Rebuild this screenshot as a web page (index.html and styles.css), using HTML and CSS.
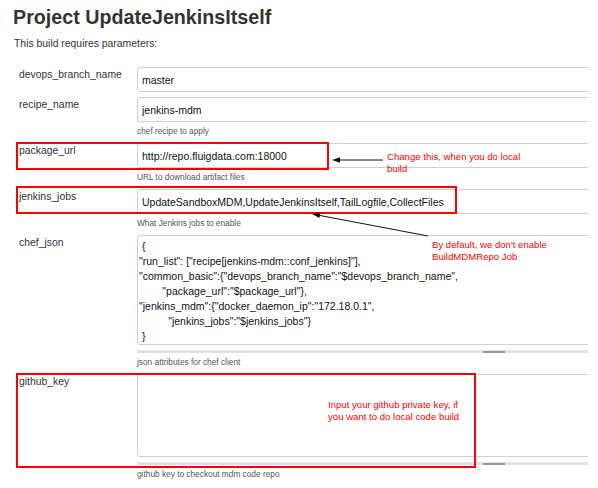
FILE: index.html
```html
<!DOCTYPE html>
<html>
<head>
<meta charset="utf-8">
<title>Project UpdateJenkinsItself</title>
<link rel="stylesheet" href="styles.css">
</head>
<body>
<div class="page">
  <h1 class="title">Project UpdateJenkinsItself</h1>
  <p class="intro">This build requires parameters:</p>
  <div class="params">
    <div class="param plain">
      <div class="name">devops_branch_name</div>
      <div class="control"><input class="field" type="text" value="master"></div>
    </div>
    <div class="param">
      <div class="name">recipe_name</div>
      <div class="control"><input class="field" type="text" value="jenkins-mdm"><div class="desc">chef recipe to apply</div></div>
    </div>
    <div class="param">
      <div class="name">package_url</div>
      <div class="control"><input class="field" type="text" value="http://repo.fluigdata.com:18000"><div class="desc">URL to download artifact files</div></div>
    </div>
    <div class="param">
      <div class="name">jenkins_jobs</div>
      <div class="control"><input class="field" type="text" value="UpdateSandboxMDM,UpdateJenkinsItself,TailLogfile,CollectFiles"><div class="desc">What Jenkins jobs to enable</div></div>
    </div>
    <div class="param">
      <div class="name">chef_json</div>
      <div class="control">
<textarea class="area json" wrap="off"> {
"run_list": ["recipe[jenkins-mdm::conf_jenkins]"],
"common_basic":{"devops_branch_name":"$devops_branch_name",
        "package_url":"$package_url"},
"jenkins_mdm":{"docker_daemon_ip":"172.18.0.1",
          "jenkins_jobs":"$jenkins_jobs"}
 }</textarea>
        <div class="grip"><span class="grip-handle"></span></div>
        <div class="desc">json attributes for chef client</div>
      </div>
    </div>
    <div class="param">
      <div class="name">github_key</div>
      <div class="control">
        <textarea class="area key" wrap="off"></textarea>
        <div class="grip"><span class="grip-handle"></span></div>
        <div class="desc">github key to checkout mdm code repo</div>
      </div>
    </div>
  </div>

  <div class="mark mark-url"></div>
  <div class="mark mark-jobs"></div>
  <div class="mark mark-key"></div>

  <div class="note note-change">Change this, when you do local<br>build</div>
  <div class="note note-default">By default, we don't enable<br>BuildMDMRepo Job</div>
  <div class="note note-key">Input your github private key, if<br>you want to do local code build</div>

  <svg class="arrows" width="598" height="488" viewBox="0 0 598 488">
    <line x1="383" y1="160" x2="338" y2="160" stroke="#111" stroke-width="1"/>
    <polygon points="332,160 340,157.3 340,162.7" fill="#111"/>
    <line x1="428" y1="236" x2="319.5" y2="215.4" stroke="#111" stroke-width="1"/>
    <polygon points="312,214 320.4,212.9 319.4,218.1" fill="#111"/>
  </svg>
</div>
</body>
</html>
```

FILE: styles.css
```css
body {
  margin: 0;
  background: #fff;
  font-family: "Liberation Sans", Arial, sans-serif;
  color: #333;
}

.page {
  position: relative;
  width: 598px;
  height: 488px;
  overflow: hidden;
}

.title {
  margin: 0;
  padding: 5px 0 0 13px;
  font-size: 19.7px;
  line-height: 24px;
  font-weight: bold;
  color: #333;
}

.intro {
  margin: 9px 0 0 14px;
  font-size: 10.4px;
  line-height: 12px;
  color: #333;
}

.params {
  width: 588px;
  overflow: hidden;
  margin-top: 17px;
}

.param {
  display: grid;
  grid-template-columns: 137px 714px;
}

.param.plain {
  margin-bottom: 5px;
}

.name {
  padding: 1.5px 0 0 19px;
  font-size: 10.4px;
  line-height: 12px;
  color: #333;
}

.field {
  display: block;
  box-sizing: border-box;
  width: 100%;
  height: 25px;
  margin: 0;
  padding: 0 4px;
  border: 1px solid #cfcfcf;
  border-radius: 3px;
  background: #fff;
  font-family: "Liberation Sans", Arial, sans-serif;
  font-size: 10.5px;
  color: #111;
  outline: none;
}

.desc {
  margin: 4px 0 7px;
  font-size: 8.3px;
  line-height: 10px;
  color: #555;
}

.area {
  display: block;
  box-sizing: border-box;
  width: 100%;
  margin: 0;
  padding: 3px 1px;
  border: 1px solid #cfcfcf;
  border-radius: 3px;
  background: #fff;
  font-family: "Liberation Sans", Arial, sans-serif;
  font-size: 10.5px;
  line-height: 15px;
  color: #111;
  resize: none;
  overflow: hidden;
  white-space: pre;
  outline: none;
}

.area.json {
  height: 110px;
}

.area.key {
  height: 83px;
}

.grip {
  display: flex;
  justify-content: center;
  align-items: center;
  height: 3px;
  margin-top: 5px;
  background: #e2e2e2;
}

.grip-handle {
  width: 22px;
  height: 2px;
  background: #9a9a9a;
}

.mark {
  position: absolute;
  box-sizing: border-box;
  border: 2px solid #ff0000;
}

.mark-url {
  left: 16px;
  top: 142px;
  width: 313px;
  height: 28px;
}

.mark-jobs {
  left: 16px;
  top: 186px;
  width: 441px;
  height: 28px;
}

.mark-key {
  left: 16px;
  top: 373px;
  width: 460px;
  height: 95px;
}

.note {
  position: absolute;
  color: #ff0000;
  font-size: 9.6px;
  line-height: 11.5px;
  white-space: nowrap;
}

.note-change {
  left: 387px;
  top: 151px;
}

.note-default {
  left: 432px;
  top: 239px;
}

.note-key {
  left: 328px;
  top: 399px;
}

.arrows {
  position: absolute;
  left: 0;
  top: 0;
  pointer-events: none;
}
```
